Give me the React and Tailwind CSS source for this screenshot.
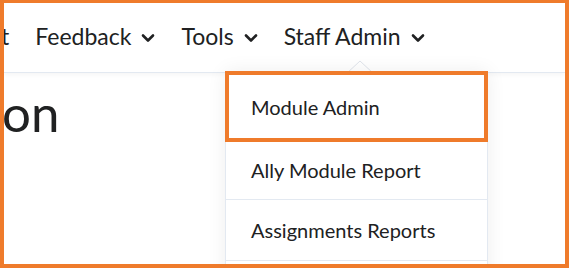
import React from 'react';

const Chevron = () => (
  <svg width="14" height="10" viewBox="0 0 14 10" className="shrink-0 mt-[2px]">
    <path d="M2 2.5 L7 7.5 L12 2.5" fill="none" stroke="#202122" strokeWidth="2.6" strokeLinecap="round" strokeLinejoin="round" />
  </svg>
);

const NavItem = ({ label }) => (
  <div className="flex items-center gap-[10px]">
    <span>{label}</span>
    <Chevron />
  </div>
);

export default function App() {
  return (
    <div className="w-[569px] h-[268px] box-border border-[#ef7b2b] border-t-[3px] border-l-[4px] border-r-[4px] border-b-[4px] bg-white">
      <div className="relative w-full h-full overflow-hidden bg-white font-['Lato','Liberation_Sans',sans-serif] text-[#202122]">
        <header className="h-[70px] flex items-center gap-[26px] text-[23px] border-b border-[#e3e9f1] shadow-[0_2px_4px_rgba(0,0,0,0.04)] pb-[2px]">
          <span className="-ml-[3px]">t</span>
          <NavItem label="Feedback" />
          <NavItem label="Tools" />
          <NavItem label="Staff Admin" />
        </header>

        <h1 className="text-[51px] leading-none mt-[14px] -ml-[2px]">on</h1>

        <div className="absolute left-[221px] top-[68px] w-[263px]">
          <svg width="28" height="14" viewBox="0 0 28 14" className="absolute left-[121px] -top-[11px]">
            <path d="M0 14 L14 1 L28 14" fill="white" stroke="#dfe4ea" strokeWidth="1" />
          </svg>
          <div className="relative bg-white border border-[#e3e9f1] shadow-[0_0_18px_rgba(0,0,0,0.07)] text-[20px]">
            <div className="h-[71px] flex items-center px-[22px] border-[4px] border-[#ef7b2b] -m-px">Module Admin</div>
            <div className="h-[59px] flex items-center px-[25px] border-b border-[#e3e9f1]">Ally Module Report</div>
            <div className="h-[61px] flex items-center px-[25px] border-b border-[#e3e9f1]">Assignments Reports</div>
            <div className="h-[50px] flex items-center px-[25px]">Reports</div>
          </div>
        </div>
      </div>
    </div>
  );
}
